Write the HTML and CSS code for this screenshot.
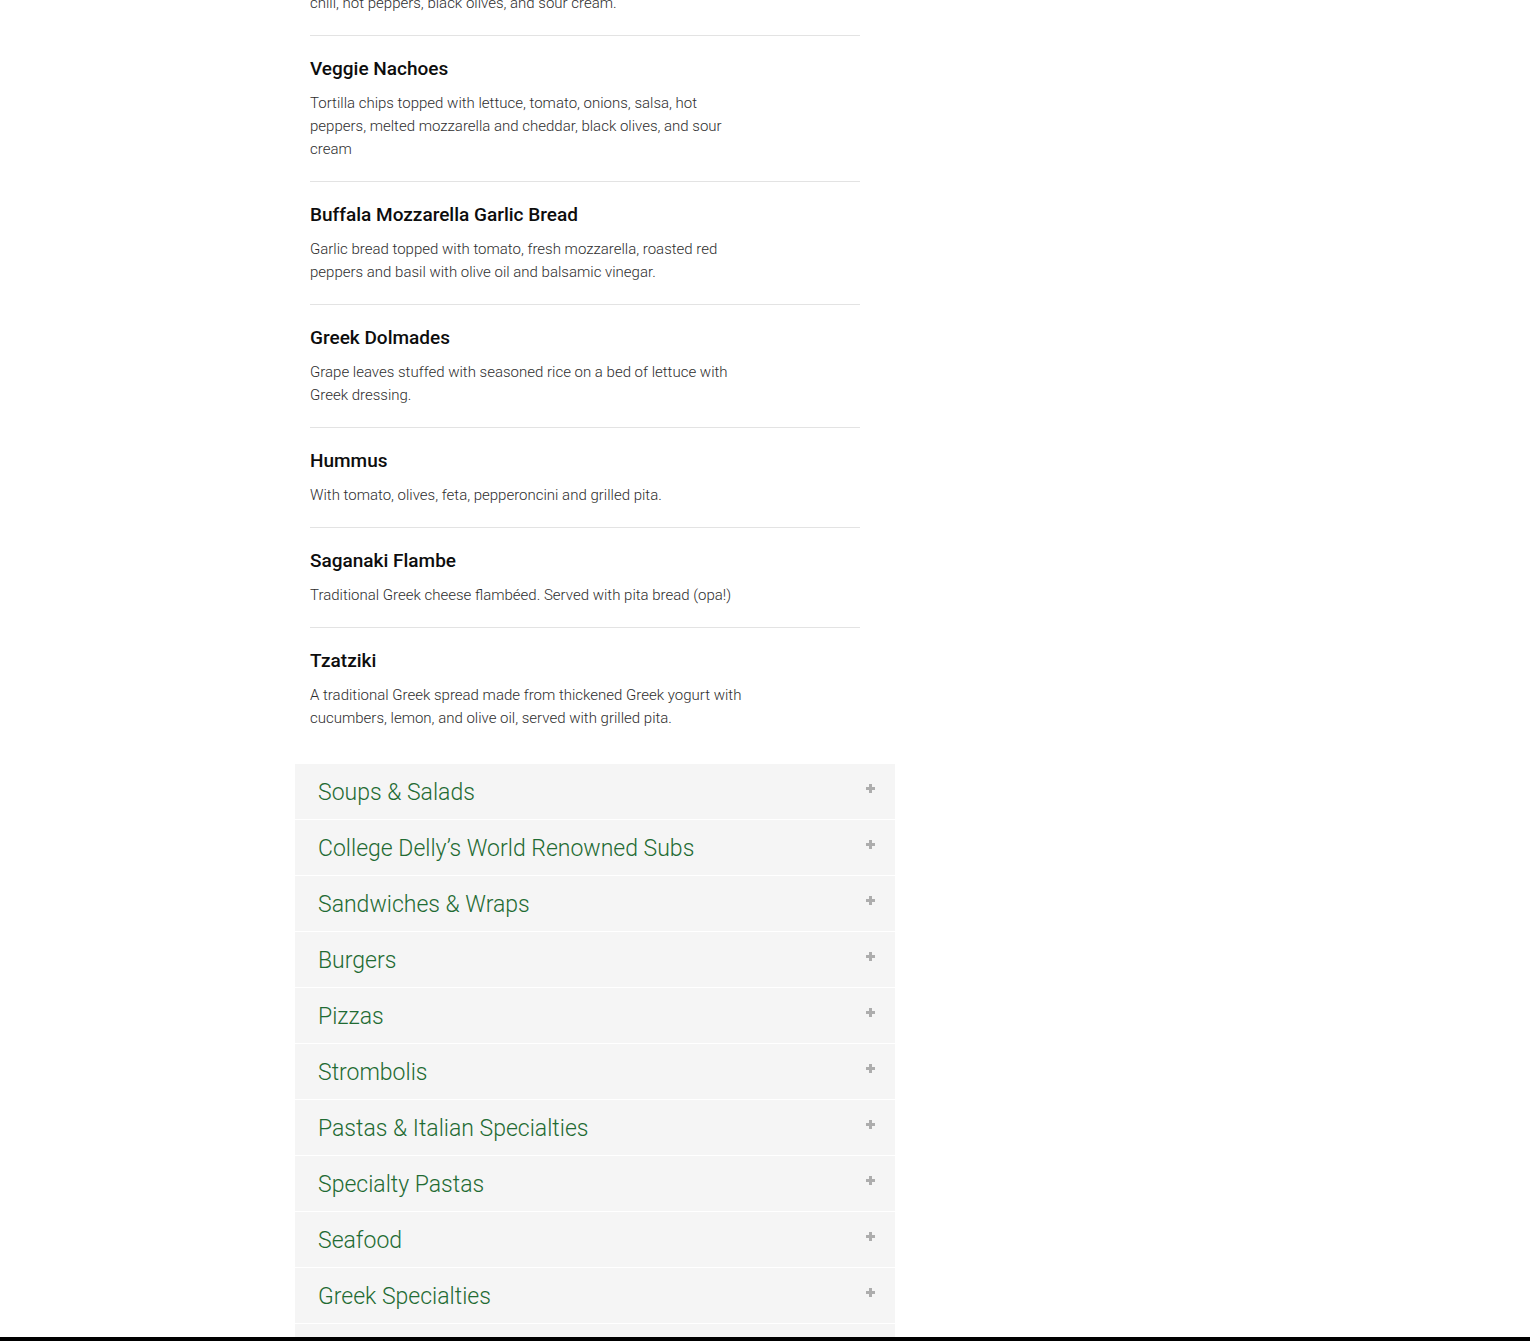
FILE: index.html
```html
<!DOCTYPE html>
<html lang="en">
<head>
  <meta charset="UTF-8" />
  <meta name="viewport" content="width=device-width, initial-scale=1.0"/>
  <title>Menu</title>
  <link rel="stylesheet" href="styles.css">
</head>
<body>
  <main class="menu">
    <div class="items">
      <div class="item item-cut">
        <p>chili, hot peppers, black olives, and sour cream.</p>
      </div>
      <div class="item">
        <h3>Veggie Nachoes</h3>
        <p>Tortilla chips topped with lettuce, tomato, onions, salsa, hot peppers, melted mozzarella and cheddar, black olives, and sour cream</p>
      </div>
      <div class="item">
        <h3>Buffala Mozzarella Garlic Bread</h3>
        <p>Garlic bread topped with tomato, fresh mozzarella, roasted red peppers and basil with olive oil and balsamic vinegar.</p>
      </div>
      <div class="item">
        <h3>Greek Dolmades</h3>
        <p>Grape leaves stuffed with seasoned rice on a bed of lettuce with Greek dressing.</p>
      </div>
      <div class="item">
        <h3>Hummus</h3>
        <p>With tomato, olives, feta, pepperoncini and grilled pita.</p>
      </div>
      <div class="item">
        <h3>Saganaki Flambe</h3>
        <p>Traditional Greek cheese flambéed. Served with pita bread (opa!)</p>
      </div>
      <div class="item">
        <h3>Tzatziki</h3>
        <p>A traditional Greek spread made from thickened Greek yogurt with cucumbers, lemon, and olive oil, served with grilled pita.</p>
      </div>
    </div>

    <div class="sections">
      <div class="section"><span>Soups &amp; Salads</span><svg class="plus" viewBox="0 0 9 9"><path d="M3 0h3v3h3v3H6v3H3V6H0V3h3z"/></svg></div>
      <div class="section"><span>College Delly’s World Renowned Subs</span><svg class="plus" viewBox="0 0 9 9"><path d="M3 0h3v3h3v3H6v3H3V6H0V3h3z"/></svg></div>
      <div class="section"><span>Sandwiches &amp; Wraps</span><svg class="plus" viewBox="0 0 9 9"><path d="M3 0h3v3h3v3H6v3H3V6H0V3h3z"/></svg></div>
      <div class="section"><span>Burgers</span><svg class="plus" viewBox="0 0 9 9"><path d="M3 0h3v3h3v3H6v3H3V6H0V3h3z"/></svg></div>
      <div class="section"><span>Pizzas</span><svg class="plus" viewBox="0 0 9 9"><path d="M3 0h3v3h3v3H6v3H3V6H0V3h3z"/></svg></div>
      <div class="section"><span>Strombolis</span><svg class="plus" viewBox="0 0 9 9"><path d="M3 0h3v3h3v3H6v3H3V6H0V3h3z"/></svg></div>
      <div class="section"><span>Pastas &amp; Italian Specialties</span><svg class="plus" viewBox="0 0 9 9"><path d="M3 0h3v3h3v3H6v3H3V6H0V3h3z"/></svg></div>
      <div class="section"><span>Specialty Pastas</span><svg class="plus" viewBox="0 0 9 9"><path d="M3 0h3v3h3v3H6v3H3V6H0V3h3z"/></svg></div>
      <div class="section"><span>Seafood</span><svg class="plus" viewBox="0 0 9 9"><path d="M3 0h3v3h3v3H6v3H3V6H0V3h3z"/></svg></div>
      <div class="section"><span>Greek Specialties</span><svg class="plus" viewBox="0 0 9 9"><path d="M3 0h3v3h3v3H6v3H3V6H0V3h3z"/></svg></div>
      <div class="section"></div>
    </div>
  </main>

  <div class="bottom-bar"></div>
</body>
</html>
```

FILE: styles.css
```css
html, body {
  overflow: hidden;
}
body {
  font-family: Roboto, 'Liberation Sans', sans-serif;
  background: #fff;
  margin: 0;
  height: 1341px;
}
.menu {
  width: 600px;
  margin-left: 295px;
}
.items {
  width: 550px;
  margin-left: 15px;
  margin-top: -8px;
}
.item {
  padding: 22px 0 20px;
  border-bottom: 1px solid #e3e3e3;
}
.item:last-child {
  border-bottom: none;
  padding-bottom: 34px;
}
.item-cut {
  padding-top: 0;
}
.item h3 {
  font-size: 19px;
  line-height: 22px;
  font-weight: 500;
  color: #0d0d0d;
  margin: 0 0 12px;
}
.item p {
  font-size: 15px;
  line-height: 23px;
  font-weight: 300;
  color: #2e2e2e;
  margin: 0;
  max-width: 440px;
}
.sections {
  background: #f5f5f5;
}
.section {
  height: 55px;
  border-bottom: 1px solid #fff;
  padding: 2px 20px 0 23px;
  box-sizing: border-box;
  height: 56px;
  display: flex;
  align-items: center;
  justify-content: space-between;
}
.section span {
  font-size: 23px;
  font-weight: 300;
  color: #1f6b33;
}
.plus {
  width: 9px;
  height: 9px;
  fill: #adadad;
  align-self: flex-start;
  margin-top: 18px;
}
.bottom-bar {
  position: fixed;
  left: 0;
  right: 0;
  bottom: 0;
  height: 4px;
  background: #000;
}
```
